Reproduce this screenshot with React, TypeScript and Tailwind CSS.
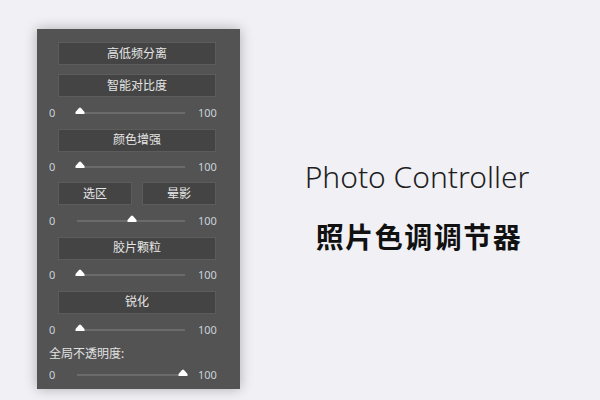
const font = "font-['Noto_Sans','Noto_Sans_CJK_SC',sans-serif]";

const Btn = ({ label, className = '' }: { label: string; className?: string }) => (
	<div
		className={`flex h-[23px] items-center justify-center border border-[#5c5c5c] bg-[#444444] text-[12px] text-[#e6e6e6] ${className}`}
	>
		{label}
	</div>
);

const Slider = ({ value, className = 'h-[32px]' }: { value: number; className?: string }) => (
	<div className={`flex items-center ${className}`}>
		<span className="w-[40px] pl-[12px] text-[11px] text-[#c9d2da]">0</span>
		<div className="relative h-[2px] w-[108px] bg-[#6b6b6b]">
			<svg
				className="absolute -top-[5px] -translate-x-1/2"
				style={{ left: `${value}%` }}
				width="10"
				height="7"
				viewBox="0 0 10 7"
			>
				<path d="M0.5 7 L0.5 5 L4 1 Q5 0 6 1 L9.5 5 L9.5 7 Z" fill="#ffffff" />
			</svg>
		</div>
		<span className="ml-[13px] text-[11px] text-[#c9d2da]">100</span>
	</div>
);

export default function App() {
	return (
		<div className={`flex h-[400px] w-[600px] bg-[#f0f0f5] ${font}`}>
			<div className="ml-[37px] mt-[29px] flex h-[360px] w-[203px] flex-col bg-[#535353] pt-[13px] shadow-[0_0_12px_rgba(0,0,0,0.28)]">
				<div className="pl-[21px] pr-[24px]">
					<Btn label="高低频分离" />
					<Btn label="智能对比度" className="mt-[9px]" />
				</div>
				<Slider value={3} />
				<div className="pl-[21px] pr-[24px]">
					<Btn label="颜色增强" />
				</div>
				<Slider value={3} className="h-[31px]" />
				<div className="flex gap-[10px] pl-[21px] pr-[24px]">
					<Btn label="选区" className="flex-1" />
					<Btn label="晕影" className="flex-1" />
				</div>
				<Slider value={51} />
				<div className="pl-[21px] pr-[24px]">
					<Btn label="胶片颗粒" />
				</div>
				<Slider value={3} className="h-[31px]" />
				<div className="pl-[21px] pr-[24px]">
					<Btn label="锐化" />
				</div>
				<Slider value={3} className="h-[34px]" />
				<div className="pl-[12px] text-[12px] leading-[14px] text-[#e2e2e2]">全局不透明度:</div>
				<Slider value={98} className="h-[28px]" />
			</div>
			<div className="flex flex-1 flex-col items-center pt-[156px]">
				<div className="mr-[6px] text-[30px] font-light leading-[42px] text-[#1e1e1e]">Photo Controller</div>
				<div className="mr-[2px] mt-[20px] text-[28px] font-bold leading-[38px] tracking-[1.5px] text-[#111]">
					照片色调调节器
				</div>
			</div>
		</div>
	);
}
